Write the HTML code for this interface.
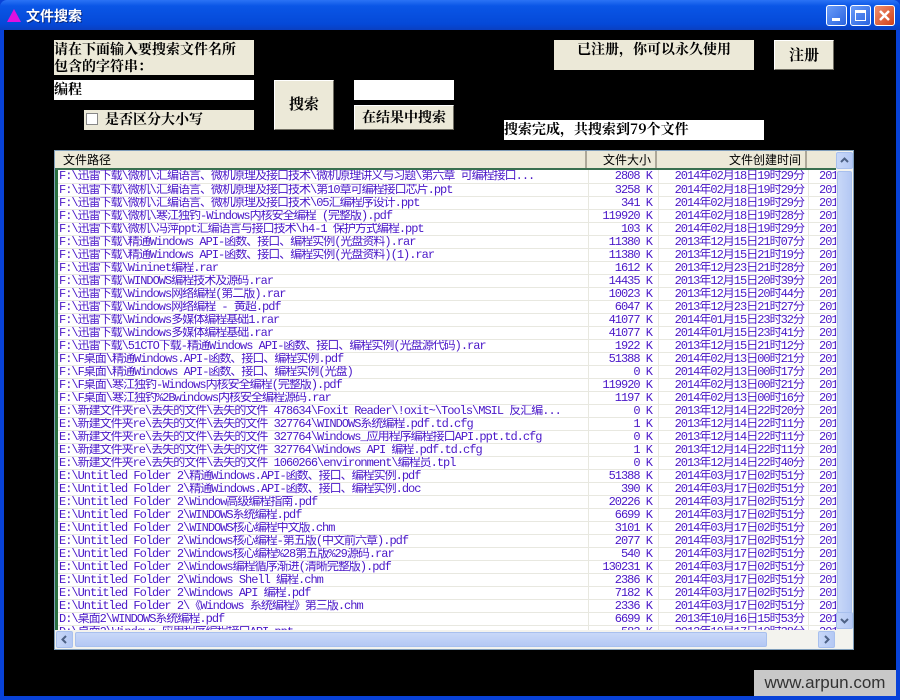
<!DOCTYPE html>
<html><head><meta charset="utf-8">
<style>
*{margin:0;padding:0;box-sizing:border-box}
body{width:900px;height:700px;background:#0842d8;position:relative;overflow:hidden;font-family:"Liberation Sans","Noto Sans CJK SC",sans-serif}
#title{position:absolute;left:0;top:0;width:900px;height:30px;background:linear-gradient(#2b73f5,#0a56e6 20%,#0549d8 80%,#0a3fc0);border-radius:7px 7px 0 0}
#title .t{position:absolute;left:26px;top:6px;color:#fff;font-weight:bold;font-size:14px;font-family:"Noto Sans CJK SC",sans-serif;text-shadow:1px 1px #0a2a80}
.tri{position:absolute;left:7px;top:9px;width:0;height:0;border-left:7px solid transparent;border-right:7px solid transparent;border-bottom:13px solid #e010e0}
.wb{position:absolute;top:5px;width:21px;height:21px;border:1px solid #fff;border-radius:3px;background:linear-gradient(135deg,#6a9cf8,#2a63e0)}
.wb.x{background:linear-gradient(135deg,#f09070,#d04018)}
#client{position:absolute;left:4px;top:30px;width:892px;height:666px;background:#000}
.lbl{position:absolute;background:#ece9d8;font-family:"Noto Serif CJK SC","Noto Sans CJK SC",serif;font-weight:bold;font-size:14px;color:#000;line-height:17px}
.btn{position:absolute;background:#ece9d8;border:1px solid;border-color:#fff #716f64 #716f64 #fff;font-family:"Noto Serif CJK SC",serif;font-weight:bold;font-size:15px;text-align:center}
.inp{position:absolute;background:#fff}
#list{position:absolute;left:54px;top:150px;width:800px;height:500px;background:#fff;border:1px solid #7f9db9;overflow:hidden}
#hdr{position:absolute;left:0;top:0;height:19px;width:782px;background:#ece9d8;border-bottom:2px solid #3a7050;font-size:12px;font-family:"Noto Sans CJK SC",sans-serif}
#hdr div{position:absolute;top:0;height:17px;line-height:17px;border-right:2px solid #aca899}
table{position:absolute;left:0;top:19px;border-collapse:collapse;table-layout:fixed;width:780px}
td{height:13px;line-height:12px;font-family:"Liberation Mono","Noto Sans CJK SC",monospace;font-size:12px;letter-spacing:-1px;color:#4a18c8;white-space:nowrap;overflow:hidden;border-bottom:1px solid #e8e8e0;border-right:1px solid #e8e8e0;padding:0}
td.p{border-left:3px solid #2a7040;padding-left:1px}
td.s{text-align:right;padding-right:6px}
td.d{text-align:right;padding-right:4px}
td.e{padding-left:10px}
#vs{position:absolute;left:781px;top:0;width:17px;height:479px;background:#f3f3ee}
#hs{position:absolute;left:0;top:479px;width:798px;height:19px;background:#f3f3ee}
.sb{position:absolute;background:linear-gradient(90deg,#c8d8f8,#b4c8f4);border:1px solid #a8c0ee;border-radius:2px}
.sb svg{position:absolute;left:3px;top:3px}
</style></head><body>
<div id="title"><div class="tri"></div><div class="t">文件搜索</div>
<div class="wb" style="left:826px"><div style="position:absolute;left:5px;top:12px;width:8px;height:3px;background:#fff"></div></div>
<div class="wb" style="left:850px"><div style="position:absolute;left:4px;top:4px;width:11px;height:11px;border:1px solid #fff;border-top-width:3px"></div></div>
<div class="wb x" style="left:874px"><svg width="19" height="19" style="position:absolute;left:0;top:0"><path d="M5 5L14 14M14 5L5 14" stroke="#fff" stroke-width="2.5"/></svg></div>
</div>
<div id="client"></div>
<div class="lbl" style="left:54px;top:40px;width:200px;height:35px;padding-top:1px">请在下面输入要搜索文件名所<br>包含的字符串：</div>
<div class="inp" style="left:54px;top:80px;width:200px;height:20px;font-family:'Noto Serif CJK SC',serif;font-weight:bold;font-size:14px;line-height:18px">编程</div>
<div class="lbl" style="left:84px;top:110px;width:170px;height:20px;padding-left:2px;line-height:19px"><span style="display:inline-block;width:12px;height:12px;border:1px solid #888;background:#fff;vertical-align:-1px;margin-right:7px"></span>是否区分大小写</div>
<div class="btn" style="left:274px;top:80px;width:60px;height:50px;line-height:46px">搜索</div>
<div class="inp" style="left:354px;top:80px;width:100px;height:20px"></div>
<div class="btn" style="left:354px;top:105px;width:100px;height:25px;line-height:22px;font-size:14px">在结果中搜索</div>
<div class="lbl" style="left:554px;top:40px;width:200px;height:30px;text-align:center;line-height:17px;padding-top:1px">已注册，你可以永久使用</div>
<div class="btn" style="left:774px;top:40px;width:60px;height:30px;line-height:27px">注册</div>
<div class="lbl" style="left:504px;top:120px;width:260px;height:20px;background:#fff;line-height:18px">搜索完成，共搜索到79个文件</div>
<div id="list">
<div id="hdr"><div style="left:0;width:532px;padding-left:8px">文件路径</div><div style="left:532px;width:70px;text-align:right;padding-right:4px">文件大小</div><div style="left:602px;width:150px;text-align:right;padding-right:4px">文件创建时间</div></div>
<table>
<colgroup><col style="width:532px"><col style="width:70px"><col style="width:150px"><col style="width:28px"></colgroup>
<tr><td class="p">F:\迅雷下载\微机\汇编语言、微机原理及接口技术\微机原理讲义与习题\第六章  可编程接口...</td><td class="s">2808 K</td><td class="d">2014年02月18日19时29分</td><td class="e">201</td></tr>
<tr><td class="p">F:\迅雷下载\微机\汇编语言、微机原理及接口技术\第10章可编程接口芯片.ppt</td><td class="s">3258 K</td><td class="d">2014年02月18日19时29分</td><td class="e">201</td></tr>
<tr><td class="p">F:\迅雷下载\微机\汇编语言、微机原理及接口技术\05汇编程序设计.ppt</td><td class="s">341 K</td><td class="d">2014年02月18日19时29分</td><td class="e">201</td></tr>
<tr><td class="p">F:\迅雷下载\微机\寒江独钓-Windows内核安全编程 (完整版).pdf</td><td class="s">119920 K</td><td class="d">2014年02月18日19时28分</td><td class="e">201</td></tr>
<tr><td class="p">F:\迅雷下载\微机\冯萍ppt汇编语言与接口技术\h4-1 保护方式编程.ppt</td><td class="s">103 K</td><td class="d">2014年02月18日19时29分</td><td class="e">201</td></tr>
<tr><td class="p">F:\迅雷下载\精通Windows API-函数、接口、编程实例(光盘资料).rar</td><td class="s">11380 K</td><td class="d">2013年12月15日21时07分</td><td class="e">201</td></tr>
<tr><td class="p">F:\迅雷下载\精通Windows API-函数、接口、编程实例(光盘资料)(1).rar</td><td class="s">11380 K</td><td class="d">2013年12月15日21时19分</td><td class="e">201</td></tr>
<tr><td class="p">F:\迅雷下载\Wininet编程.rar</td><td class="s">1612 K</td><td class="d">2013年12月23日21时28分</td><td class="e">201</td></tr>
<tr><td class="p">F:\迅雷下载\WINDOWS编程技术及源码.rar</td><td class="s">14435 K</td><td class="d">2013年12月15日20时39分</td><td class="e">201</td></tr>
<tr><td class="p">F:\迅雷下载\Windows网络编程(第二版).rar</td><td class="s">10023 K</td><td class="d">2013年12月15日20时44分</td><td class="e">201</td></tr>
<tr><td class="p">F:\迅雷下载\Windows网络编程 - 黄超.pdf</td><td class="s">6047 K</td><td class="d">2013年12月23日21时27分</td><td class="e">201</td></tr>
<tr><td class="p">F:\迅雷下载\Windows多媒体编程基础1.rar</td><td class="s">41077 K</td><td class="d">2014年01月15日23时32分</td><td class="e">201</td></tr>
<tr><td class="p">F:\迅雷下载\Windows多媒体编程基础.rar</td><td class="s">41077 K</td><td class="d">2014年01月15日23时41分</td><td class="e">201</td></tr>
<tr><td class="p">F:\迅雷下载\51CTO下载-精通Windows API-函数、接口、编程实例(光盘源代码).rar</td><td class="s">1922 K</td><td class="d">2013年12月15日21时12分</td><td class="e">201</td></tr>
<tr><td class="p">F:\F桌面\精通Windows.API-函数、接口、编程实例.pdf</td><td class="s">51388 K</td><td class="d">2014年02月13日00时21分</td><td class="e">201</td></tr>
<tr><td class="p">F:\F桌面\精通Windows API-函数、接口、编程实例(光盘)</td><td class="s">0 K</td><td class="d">2014年02月13日00时17分</td><td class="e">201</td></tr>
<tr><td class="p">F:\F桌面\寒江独钓-Windows内核安全编程(完整版).pdf</td><td class="s">119920 K</td><td class="d">2014年02月13日00时21分</td><td class="e">201</td></tr>
<tr><td class="p">F:\F桌面\寒江独钓%2Bwindows内核安全编程源码.rar</td><td class="s">1197 K</td><td class="d">2014年02月13日00时16分</td><td class="e">201</td></tr>
<tr><td class="p">E:\新建文件夹re\丢失的文件\丢失的文件 478634\Foxit Reader\!oxit~\Tools\MSIL 反汇编...</td><td class="s">0 K</td><td class="d">2013年12月14日22时20分</td><td class="e">201</td></tr>
<tr><td class="p">E:\新建文件夹re\丢失的文件\丢失的文件 327764\WINDOWS系统编程.pdf.td.cfg</td><td class="s">1 K</td><td class="d">2013年12月14日22时11分</td><td class="e">201</td></tr>
<tr><td class="p">E:\新建文件夹re\丢失的文件\丢失的文件 327764\Windows_应用程序编程接口API.ppt.td.cfg</td><td class="s">0 K</td><td class="d">2013年12月14日22时11分</td><td class="e">201</td></tr>
<tr><td class="p">E:\新建文件夹re\丢失的文件\丢失的文件 327764\Windows API 编程.pdf.td.cfg</td><td class="s">1 K</td><td class="d">2013年12月14日22时11分</td><td class="e">201</td></tr>
<tr><td class="p">E:\新建文件夹re\丢失的文件\丢失的文件 1060266\environment\编程员.tpl</td><td class="s">0 K</td><td class="d">2013年12月14日22时40分</td><td class="e">201</td></tr>
<tr><td class="p">E:\Untitled Folder 2\精通Windows.API-函数、接口、编程实例.pdf</td><td class="s">51388 K</td><td class="d">2014年03月17日02时51分</td><td class="e">201</td></tr>
<tr><td class="p">E:\Untitled Folder 2\精通Windows.API-函数、接口、编程实例.doc</td><td class="s">390 K</td><td class="d">2014年03月17日02时51分</td><td class="e">201</td></tr>
<tr><td class="p">E:\Untitled Folder 2\Window高级编程指南.pdf</td><td class="s">20226 K</td><td class="d">2014年03月17日02时51分</td><td class="e">201</td></tr>
<tr><td class="p">E:\Untitled Folder 2\WINDOWS系统编程.pdf</td><td class="s">6699 K</td><td class="d">2014年03月17日02时51分</td><td class="e">201</td></tr>
<tr><td class="p">E:\Untitled Folder 2\WINDOWS核心编程中文版.chm</td><td class="s">3101 K</td><td class="d">2014年03月17日02时51分</td><td class="e">201</td></tr>
<tr><td class="p">E:\Untitled Folder 2\Windows核心编程-第五版(中文前六章).pdf</td><td class="s">2077 K</td><td class="d">2014年03月17日02时51分</td><td class="e">201</td></tr>
<tr><td class="p">E:\Untitled Folder 2\Windows核心编程%28第五版%29源码.rar</td><td class="s">540 K</td><td class="d">2014年03月17日02时51分</td><td class="e">201</td></tr>
<tr><td class="p">E:\Untitled Folder 2\Windows编程循序渐进(清晰完整版).pdf</td><td class="s">130231 K</td><td class="d">2014年03月17日02时51分</td><td class="e">201</td></tr>
<tr><td class="p">E:\Untitled Folder 2\Windows Shell 编程.chm</td><td class="s">2386 K</td><td class="d">2014年03月17日02时51分</td><td class="e">201</td></tr>
<tr><td class="p">E:\Untitled Folder 2\Windows API 编程.pdf</td><td class="s">7182 K</td><td class="d">2014年03月17日02时51分</td><td class="e">201</td></tr>
<tr><td class="p">E:\Untitled Folder 2\《Windows 系统编程》第三版.chm</td><td class="s">2336 K</td><td class="d">2014年03月17日02时51分</td><td class="e">201</td></tr>
<tr><td class="p">D:\桌面2\WINDOWS系统编程.pdf</td><td class="s">6699 K</td><td class="d">2013年10月16日15时53分</td><td class="e">201</td></tr>
<tr><td class="p">D:\桌面2\Windows_应用程序编程接口API.ppt</td><td class="s">583 K</td><td class="d">2013年10月17日10时38分</td><td class="e">201</td></tr>
</table>
<div id="vs">
<div class="sb" style="left:0;top:1px;width:17px;height:17px"><svg width="9" height="9"><path d="M1 6L4.5 2.5L8 6" stroke="#4d6185" stroke-width="2" fill="none"/></svg></div>
<div class="sb" style="left:1px;top:20px;width:15px;height:442px"></div>
<div class="sb" style="left:0;top:461px;width:17px;height:17px"><svg width="9" height="9"><path d="M1 3L4.5 6.5L8 3" stroke="#4d6185" stroke-width="2" fill="none"/></svg></div>
</div>
<div id="hs">
<div class="sb" style="left:1px;top:1px;width:17px;height:17px"><svg width="9" height="9"><path d="M6 1L2.5 4.5L6 8" stroke="#4d6185" stroke-width="2" fill="none"/></svg></div>
<div class="sb" style="left:20px;top:2px;width:692px;height:15px;background:linear-gradient(#c8d8f8,#b4c8f4)"></div>
<div class="sb" style="left:763px;top:1px;width:17px;height:17px"><svg width="9" height="9"><path d="M3 1L6.5 4.5L3 8" stroke="#4d6185" stroke-width="2" fill="none"/></svg></div>
</div>
</div>
<div style="position:absolute;left:754px;top:670px;width:142px;height:26px;background:#c8c8c8;color:#333;font-size:17px;line-height:26px;text-align:center">www.arpun.com</div>
</body></html>
